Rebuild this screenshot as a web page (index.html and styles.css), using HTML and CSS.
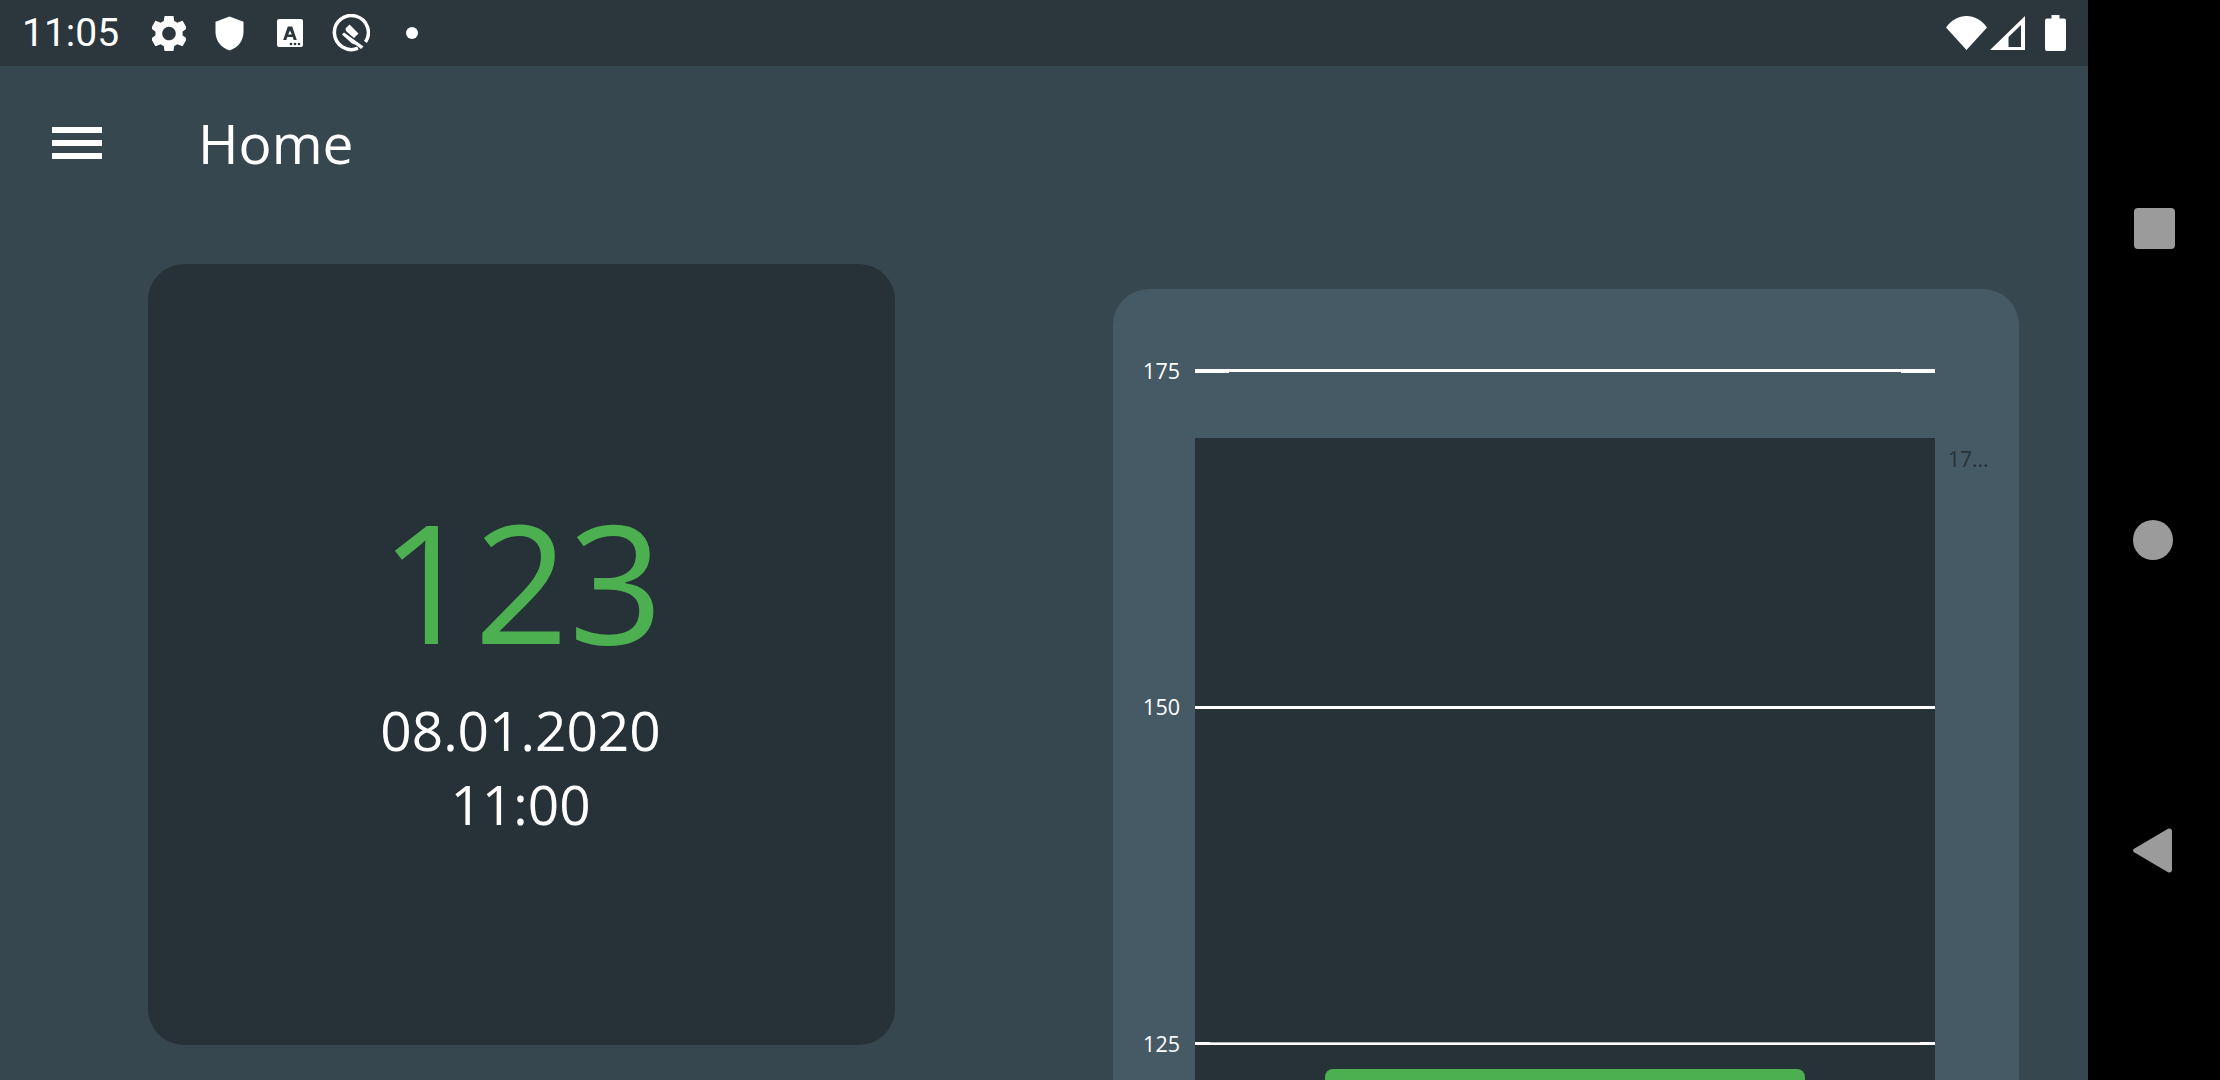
FILE: index.html
```html
<!DOCTYPE html>
<html lang="en">
<head>
  <meta charset="UTF-8" />
  <title>Home</title>
  <link rel="stylesheet" href="styles.css">
</head>
<body>
  <div class="app">
    <div class="statusbar">
      <span class="clock">11:05</span>
      <svg class="ic-gear" viewBox="3 3 18 18"><path d="M19.14 12.94c.04-.3.06-.61.06-.94 0-.32-.02-.64-.07-.94l2.03-1.58c.18-.14.23-.41.12-.61l-1.92-3.32c-.12-.22-.37-.29-.59-.22l-2.39.96c-.5-.38-1.03-.7-1.62-.94l-.36-2.54c-.04-.24-.24-.41-.48-.41h-3.84c-.24 0-.43.17-.47.41l-.36 2.54c-.59.24-1.13.57-1.62.94l-2.39-.96c-.22-.08-.47 0-.59.22L2.74 8.87c-.12.21-.08.47.12.61l2.03 1.58c-.05.3-.09.63-.09.94s.02.64.07.94l-2.03 1.58c-.18.14-.23.41-.12.61l1.92 3.32c.12.22.37.29.59.22l2.39-.96c.5.38 1.03.7 1.62.94l.36 2.54c.05.24.24.41.48.41h3.84c.24 0 .44-.17.47-.41l.36-2.54c.59-.24 1.13-.56 1.62-.94l2.39.96c.22.08.47 0 .59-.22l1.92-3.32c.12-.22.07-.47-.12-.61l-2.01-1.58zM12 15.6c-1.98 0-3.6-1.62-3.6-3.6s1.62-3.6 3.6-3.6 3.6 1.62 3.6 3.6-1.62 3.6-3.6 3.6z"/></svg>
      <svg class="ic-shield" viewBox="0 0 29 35"><path d="M14.5 0.5 L28.5 5.8 V16 C28.5 25 22.5 32 14.5 34.5 C6.5 32 0.5 25 0.5 16 V5.8 Z"/></svg>
      <svg class="ic-card" viewBox="0 0 26 28"><path fill-rule="evenodd" d="M2 0H24a2 2 0 0 1 2 2V26a2 2 0 0 1-2 2H2a2 2 0 0 1-2-2V2a2 2 0 0 1 2-2ZM10.800 7.500 6.200 21H9.300L10.300 18H15.700L16.700 21H19.800L15.200 7.500ZM13 11.500 14.800 15.500H11.200Z"/><g class="card-dots"><circle cx="14" cy="25" r="1.300"/><circle cx="18" cy="25" r="1.300"/><circle cx="22" cy="25" r="1.300"/></g></svg>
      <svg class="ic-q" viewBox="0 0 38 38"><path class="q-ring" d="M26 34.200A17 17 0 1 1 33.500 28"/><path class="q-mark" d="M17.500 10.500 26.500 19.500 22 24 14 17 13.500 14.500Z"/><path class="q-mark" d="M10 20.500 12 18.500 31.500 32.500 29 35 24 31 20 29.500Z"/></svg>
      <span class="dot"></span>
      <span class="spacer"></span>
      <svg class="ic-wifi" viewBox="0 0 41 34"><path d="M0 11.5C5.5 4 12.5 0 20.5 0S35.500 4 41 11.500L20.500 34Z"/></svg>
      <svg class="ic-signal" viewBox="0 0 35 34"><path fill-rule="evenodd" d="M0 34 35 0V34ZM18.500 31H31V9L18.500 21Z"/></svg>
      <svg class="ic-battery" viewBox="0 0 21 36"><path d="M6.500 0H14.500V3.500H19a2 2 0 0 1 2 2V34a2 2 0 0 1-2 2H2a2 2 0 0 1-2-2V5.500a2 2 0 0 1 2-2H6.500Z"/></svg>
    </div>

    <div class="toolbar">
      <div class="menu-btn"><span></span><span></span><span></span></div>
      <div class="title">Home</div>
    </div>

    <div class="content">
      <div class="reading-card">
        <div class="value">123</div>
        <div class="stamp">08.01.2020</div>
        <div class="stamp">11:00</div>
      </div>

      <div class="chart">
        <div class="plot">
          <div class="bar"></div>
        </div>
        <div class="side-label">17...</div>
        <div class="ticks">
          <div class="tick"><span class="tick-label">175</span><span class="tick-line line-top"></span></div>
          <div class="tick"><span class="tick-label">150</span><span class="tick-line"></span></div>
          <div class="tick"><span class="tick-label">125</span><span class="tick-line line-low"></span></div>
        </div>
      </div>
    </div>
  </div>

  <div class="navbar">
    <span class="nav-square"></span>
    <span class="nav-circle"></span>
    <svg class="nav-back" viewBox="0 0 39 45"><path d="M1.500 20.500 35 .8C37 0 39 1 39 3V42C39 44 37 45 35 44.200L1.500 24.500C-.5 23.500-.5 21.500 1.500 20.500Z"/></svg>
  </div>
</body>
</html>
```
FILE: styles.css
```css
html, body {
  margin: 0;
  height: 1080px;
  overflow: hidden;
}
body {
  display: flex;
  background: #000;
  font-family: "Open Sans", sans-serif;
  color: #fff;
}
.app {
  width: 2088px;
  height: 1080px;
  overflow: hidden;
  background: #37474f;
}

.statusbar {
  display: flex;
  align-items: center;
  height: 66px;
  padding: 0 22px;
  box-sizing: border-box;
  background: #2b363d;
}
.statusbar svg {
  display: block;
  flex: none;
  fill: #fff;
}
.clock {
  width: 130px;
  font-family: Roboto, sans-serif;
  font-size: 39px;
}
.ic-gear { width: 34px; height: 35px; }
.ic-shield { width: 29px; height: 35px; margin-left: 29px; }
.ic-card { width: 26px; height: 28px; margin-left: 33px; }
.card-dots { fill: #2b363d; }
.ic-q { width: 38px; height: 38px; margin-left: 29px; }
.q-ring {
  fill: none;
  stroke: #fff;
  stroke-width: 3.5;
}
.q-mark { fill: #fff; }
.dot {
  width: 12px;
  height: 12px;
  margin-left: 36px;
  border-radius: 50%;
  background: #fff;
}
.spacer { flex: 1; }
.ic-wifi { width: 41px; height: 34px; }
.ic-signal { width: 35px; height: 34px; margin-left: 3px; }
.ic-battery { width: 21px; height: 36px; margin-left: 20px; }

.toolbar {
  display: flex;
  align-items: center;
  height: 154px;
  padding-left: 52px;
}
.menu-btn {
  display: flex;
  flex-direction: column;
  gap: 7px;
  width: 50px;
}
.menu-btn span {
  height: 6px;
  background: #fff;
}
.title {
  margin: 0 0 2px 96px;
  font-size: 55px;
}

.content {
  display: flex;
  align-items: flex-start;
  padding: 44px 0 0 148px;
}
.reading-card {
  display: flex;
  flex-direction: column;
  justify-content: center;
  align-items: center;
  width: 747px;
  height: 781px;
  border-radius: 36px;
  background: #263238;
}
.value {
  font-size: 165px;
  line-height: 225px;
  color: #4caf50;
}
.stamp {
  margin-right: 2px;
  font-size: 55px;
  line-height: 74px;
}

.chart {
  position: relative;
  display: flex;
  align-items: flex-start;
  width: 906px;
  height: 900px;
  margin: 25px 0 0 218px;
  padding: 149px 0 0 82px;
  box-sizing: border-box;
  border-radius: 36px;
  background: #465a65;
}
.plot {
  width: 740px;
  height: 751px;
  background: #263238;
}
.bar {
  width: 480px;
  height: 120px;
  margin: 631px auto 0;
  border-radius: 8px 8px 0 0;
  background: #4caf50;
}
.side-label {
  margin: 7px 0 0 13px;
  font-size: 21px;
  color: #263238;
}

/* gridlines sit on top of the plot */
.ticks {
  position: absolute;
  top: 63.500px;
  left: 0;
  right: 84px;
}
.tick {
  display: flex;
  align-items: center;
  height: 36px;
  margin-bottom: 300.500px;
}
.tick-label {
  width: 67px;
  margin-right: 15px;
  font-size: 21.500px;
  line-height: 36px;
  text-align: right;
}
.tick-line {
  position: relative;
  flex: 1;
  height: 3px;
  background: #fff;
}
.line-top::before,
.line-top::after {
  content: "";
  position: absolute;
  bottom: -1px;
  width: 34px;
  height: 1px;
  background: #fff;
}
.line-top::before { left: 0; }
.line-top::after { right: 0; }
.line-low::before {
  content: "";
  position: absolute;
  top: 0;
  left: 15px;
  right: 15px;
  height: 1px;
  background: #b4b9bc;
}

.navbar {
  display: flex;
  flex-direction: column;
  align-items: center;
  width: 132px;
  height: 1080px;
  padding-top: 208px;
  box-sizing: border-box;
}
.nav-square {
  width: 41px;
  height: 41px;
  border-radius: 4px;
  background: #9b9b9b;
}
.nav-circle {
  width: 40px;
  height: 40px;
  margin: 271px 2px 0 0;
  border-radius: 50%;
  background: #9b9b9b;
}
.nav-back {
  width: 39px;
  height: 45px;
  margin: 268px 4px 0 0;
  fill: #9b9b9b;
}
```
